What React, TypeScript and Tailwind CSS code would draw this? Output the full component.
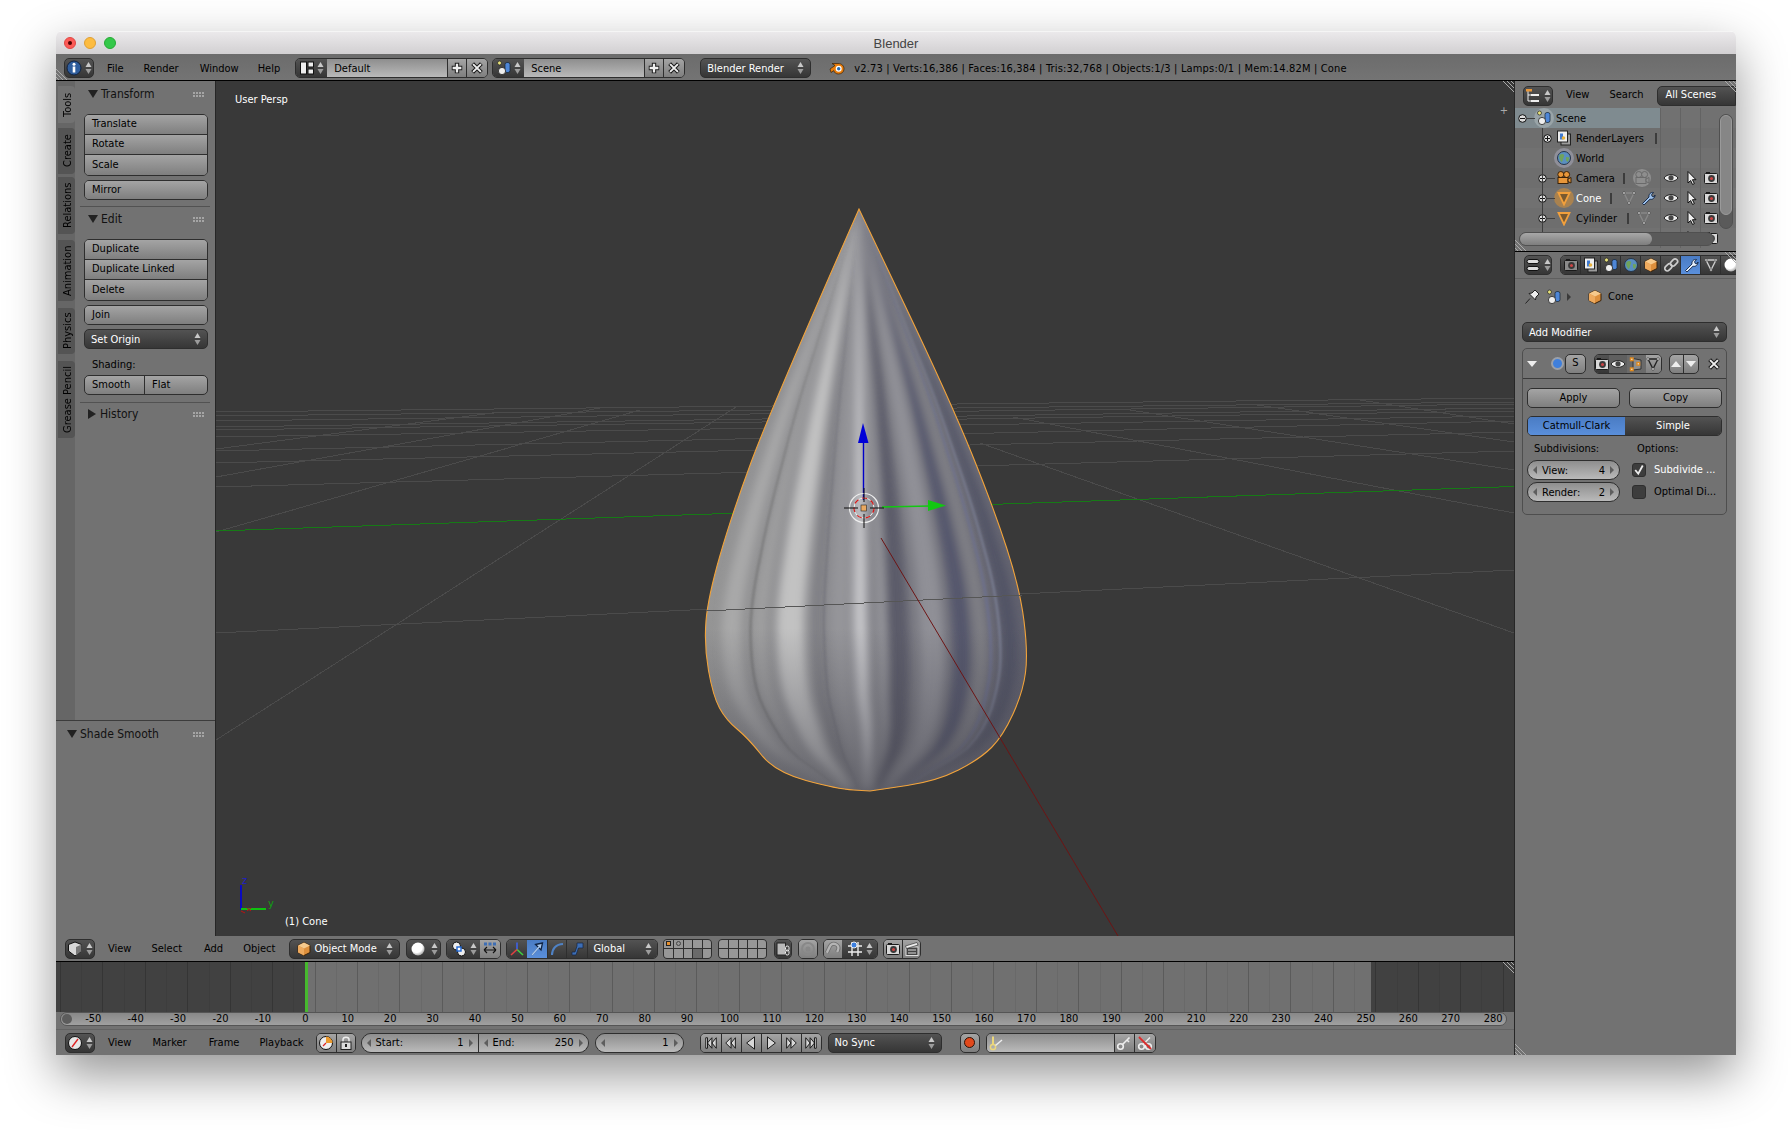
import React from "react";

// ---- cone geometry (page coordinates, the svg viewBox uses the same ones)
const leftEdge = [[209, 859], [411, 770], [514, 732], [597, 708], [645, 704], [696, 713], [720, 726], [738, 748], [772, 775], [789, 837], [791, 870]];
const rightEdge = [[209, 859], [400, 950], [506, 993], [589, 1020], [653, 1028], [692, 1023], [736, 1003], [759, 980], [781, 937], [790, 877], [791, 870]];

const edgeRaw = (edge: number[][], y: number) => {
  for (let i = 0; i < edge.length - 1; i++) {
    const [y0, x0] = edge[i];
    const [y1, x1] = edge[i + 1];
    if (y <= y1) return x0 + ((x1 - x0) * (y - y0)) / Math.max(y1 - y0, 1);
  }
  return edge[edge.length - 1][1];
};

// moving average so the ribs don't kink at the outline's corner points
const edgeAt = (edge: number[][], y: number) => {
  const span = Math.min(30, y - 209);
  let sum = 0;
  let n = 0;
  for (let k = -span; k <= span; k += 5) {
    sum += edgeRaw(edge, Math.min(y + k, 791));
    n++;
  }
  return n ? sum / n : edge[0][1];
};

const smoothPath = (pts: number[][]) => {
  let d = `M${pts[0][0]} ${pts[0][1]}`;
  for (let i = 1; i < pts.length - 1; i++) {
    const mx = (pts[i][0] + pts[i + 1][0]) / 2;
    const my = (pts[i][1] + pts[i + 1][1]) / 2;
    d += ` Q${pts[i][0]} ${pts[i][1]} ${mx} ${my}`;
  }
  return d + ` L${pts[pts.length - 1][0]} ${pts[pts.length - 1][1]}`;
};

const conePath =
  smoothPath([[859, 209], ...leftEdge.slice(1).map(([y, x]) => [x, y])]) +
  smoothPath([[870, 791], ...rightEdge.slice(1, -1).reverse().map(([y, x]) => [x, y]), [859, 209]]).replace("M", "L") +
  "Z";

const rib = (u: number, w: number) => {
  const a: string[] = [];
  const b: string[] = [];
  for (let y = 209; y <= 795; y += 10) {
    const l = edgeAt(leftEdge, y);
    const r = edgeAt(rightEdge, y);
    const x = l + (r - l) * u;
    const half = ((r - l) * w) / 2;
    a.push(`${x - half},${y}`);
    b.unshift(`${x + half},${y}`);
  }
  return [...a, ...b].join(" ");
};

const softRibs: [number, number, string, number][] = [
  [0.08, 0.06, "#b0b0b0", 0.75],
  [0.265, 0.085, "#c4c4c4", 0.95],
  [0.17, 0.04, "#a8a8a8", 0.6],
  [0.484, 0.04, "#cacace", 0.95],
  [0.56, 0.03, "#a8a8ac", 0.7],
  [0.35, 0.04, "#74747c", 0.55],
  [0.42, 0.05, "#9c9ca0", 0.6],
  [0.6, 0.07, "#565664", 0.85],
  [0.708, 0.075, "#96969c", 0.8],
  [0.8, 0.05, "#50516a", 0.85],
  [0.86, 0.04, "#84848a", 0.8],
  [0.95, 0.05, "#4d4f62", 0.8],
];
const thinRibs: [number, number, string, number][] = [
  [0.14, 0.008, "#666666", 0.55],
  [0.37, 0.007, "#66666e", 0.45],
  [0.89, 0.01, "#6c7190", 0.7],
  [0.92, 0.008, "#9096b0", 0.5],
];

const gridLines: number[][] = [
  [216, 487, 1514, 451], [216, 463, 1514, 432], [216, 451, 1514, 421], [216, 437, 1514, 416], [216, 430, 1514, 411],
  [216, 427, 1514, 408], [216, 421, 1514, 404], [216, 416, 1514, 402], [216, 412, 1514, 398],
  [216, 633, 1514, 570], [216, 740, 736, 407], [216, 532, 640, 410], [216, 477, 600, 408], [216, 449, 500, 412],
  [980, 443, 1514, 633], [1013, 417, 1514, 513], [1130, 410, 1514, 470], [1250, 404, 1514, 442], [1360, 400, 1514, 424],
];

// ---- small drawn icons
const S = ({ w = 16, h = 16, vb = "0 0 16 16", children }: { w?: number; h?: number; vb?: string; children: React.ReactNode }) => (
  <svg width={w} height={h} viewBox={vb} className="shrink-0">{children}</svg>
);
const UpDown = () => (
  <S w={7} h={14} vb="0 0 7 14">
    <path d="M3.5 1 L6.5 6 H0.5Z" fill="#c9c9c9" />
    <path d="M3.5 13 L6.5 8 H0.5Z" fill="#9c9c9c" />
  </S>
);
const InfoIcon = () => (
  <S>
    <circle cx="8" cy="8" r="7" fill="#2f5d9c" stroke="#12233f" />
    <rect x="6.7" y="6.5" width="2.6" height="6" fill="#fff" />
    <circle cx="8" cy="4.2" r="1.5" fill="#fff" />
  </S>
);
const ScreenIcon = () => (
  <S>
    <rect x="1.5" y="2" width="6" height="12" fill="#eee" stroke="#111" />
    <rect x="9" y="2" width="5.5" height="5" fill="#eee" stroke="#111" />
    <rect x="9" y="9" width="5.5" height="5" fill="#eee" stroke="#111" />
  </S>
);
const SceneIcon = () => (
  <S>
    <circle cx="3.5" cy="3" r="2" fill="#e8e27a" stroke="#222" strokeWidth=".7" />
    <rect x="9" y="2.5" width="5" height="10" rx="2" fill="#4e86d6" stroke="#123" strokeWidth=".7" />
    <circle cx="6" cy="11" r="3.6" fill="#eee" stroke="#222" strokeWidth=".8" />
  </S>
);
const PlusIcon = () => (
  <S w={14} h={14}>
    <path d="M8 2 V14 M2 8 H14" stroke="#1c1c1c" strokeWidth="5" />
    <path d="M8 3 V13 M3 8 H13" stroke="#eee" strokeWidth="2.6" />
  </S>
);
const XIcon = ({ s = 14 }: { s?: number }) => (
  <S w={s} h={s}>
    <path d="M3 3 L13 13 M13 3 L3 13" stroke="#1c1c1c" strokeWidth="4.6" />
    <path d="M3.5 3.5 L12.5 12.5 M12.5 3.5 L3.5 12.5" stroke="#eee" strokeWidth="2.2" />
  </S>
);
const BlenderLogo = () => (
  <S>
    <path d="M1 9 L6 5.5 L3 3.5 H9 C13 3.5 15 6 15 9 C15 12 12.5 14 9.5 14 C7 14 5.2 12.6 4.8 10.6 L2 12.5Z" fill="#e87d0d" stroke="#3a2208" strokeWidth=".7" />
    <circle cx="9.7" cy="8.8" r="3" fill="#fff" />
    <circle cx="9.7" cy="8.8" r="1.7" fill="#2a6cb0" />
  </S>
);
const CubeIcon = () => (
  <S>
    <path d="M8 1.5 L14 4.5 V11.5 L8 14.5 L2 11.5 V4.5Z" fill="#dd8f3c" stroke="#3a2208" />
    <path d="M2 4.5 L8 7.5 L14 4.5 L8 1.5Z" fill="#f6c98c" />
    <path d="M8 7.5 V14.5 L2 11.5 V4.5Z" fill="#eeaa5e" />
  </S>
);
const ViewCube = () => (
  <S>
    <path d="M8 1 L14.5 3.5 V10 L8 15 L1.5 10 V3.5Z" fill="#d8d8d8" stroke="#111" />
    <path d="M9 6 L14.5 3.5 V10 L9 14.5Z" fill="#777" />
  </S>
);
const ShadeSphere = () => (
  <S>
    <defs>
      <radialGradient id="sph" cx=".4" cy=".35" r=".7">
        <stop offset=".6" stopColor="#fff" />
        <stop offset="1" stopColor="#999" />
      </radialGradient>
    </defs>
    <circle cx="8" cy="8" r="6.5" fill="url(#sph)" />
  </S>
);
const PivotIcon = () => (
  <S>
    <circle cx="5.5" cy="5" r="4" fill="#eee" stroke="#111" />
    <circle cx="10.5" cy="11" r="4" fill="#eee" stroke="#111" />
    <rect x="6" y="6" width="4" height="4" fill="#fff" stroke="#1b63d0" strokeWidth="1.4" />
  </S>
);
const MoveSelIcon = () => (
  <S>
    <path d="M2 9 H14 M2 9 L5 6 M2 9 L5 12 M14 9 L11 6 M14 9 L11 12" stroke="#111" strokeWidth="1.1" fill="none" />
    <g fill="#3d6eb5"><rect x="2" y="1.5" width="3" height="3" /><rect x="6.5" y="1.5" width="3" height="3" /><rect x="11" y="1.5" width="3" height="3" /></g>
  </S>
);
const AxesIcon = () => (
  <S>
    <path d="M8 8.5 V1.5" stroke="#3e62e8" strokeWidth="1.6" />
    <path d="M8 8.5 L14 14" stroke="#3fd03f" strokeWidth="1.6" />
    <path d="M8 8.5 L2 14" stroke="#e04040" strokeWidth="1.6" />
  </S>
);
const ArrowIcon = () => (
  <S>
    <path d="M3 14 L10 6 M13.5 2 L6.5 3.5 L12 9Z" stroke="#0f2343" strokeWidth="1.3" fill="#a9c8ee" />
    <path d="M3 14 L10 6" stroke="#a9c8ee" strokeWidth="1.5" />
  </S>
);
const RotateIcon = () => (
  <S><path d="M3 14 C3 8 7 3 14 3" stroke="#4f82c5" strokeWidth="2" fill="none" /></S>
);
const ScaleIcon = () => (
  <S><path d="M3 14 V11 H6 L8 5 V2 H14 V7 H9.5 L7 14Z" fill="#3d6eb5" stroke="#14243f" strokeWidth=".7" /></S>
);
const CameraIcon = ({ faint = false }: { faint?: boolean }) => (
  <S>
    <rect x="1.5" y="3.5" width="13" height="10" rx="1" fill={faint ? "#8b8b8b" : "#d8d8d8"} stroke="#1a1a1a" />
    <rect x="3" y="2" width="4" height="2" fill="#1a1a1a" />
    <circle cx="8.5" cy="8.5" r="3.4" fill="#3a3a3a" />
    <circle cx="8.5" cy="8.5" r="1.5" fill="#c44" />
  </S>
);
const EyeIcon = () => (
  <S>
    <path d="M1 8 C4 3.5 12 3.5 15 8 C12 12.5 4 12.5 1 8Z" fill="#eee" stroke="#222" />
    <circle cx="8" cy="7.8" r="2.6" fill="#444" />
  </S>
);
const CursorIcon = () => (
  <S><path d="M5 1.5 V13 L7.6 10.5 L9.6 14.5 L11.4 13.6 L9.4 9.7 H13Z" fill="#eee" stroke="#111" /></S>
);
const TriMeshIcon = ({ c = "#888" }: { c?: string }) => (
  <S>
    <path d="M3 3 H13 L8 13Z" fill="none" stroke={c} strokeWidth="1.4" />
    <g fill="#ddd" stroke="#222" strokeWidth=".5"><circle cx="3" cy="3" r="1.3" /><circle cx="13" cy="3" r="1.3" /><circle cx="8" cy="13" r="1.3" /></g>
  </S>
);
const ConeObjIcon = () => (
  <S><path d="M2.5 3 H13.5 L8 14.5Z" fill="#7a5a30" stroke="#f2a03c" strokeWidth="1.8" /></S>
);
const WrenchIcon = ({ c = "#9cc2ee" }: { c?: string }) => (
  <S>
    <path d="M2.5 13.5 L9 7 C8.5 4.5 10.5 2 13.5 2.5 L11.5 4.8 L12.3 6.5 L14 6.8 L15 5 C15 8 12.5 10 10 9.2 L4 15Z" fill={c} stroke="#12233f" strokeWidth=".9" />
  </S>
);
const WorldIcon = () => (
  <S>
    <circle cx="8" cy="8" r="6.5" fill="#5a8fc0" stroke="#26354a" />
    <path d="M3.5 5 C6 3 9 4 8 6.5 C6.5 9 7 12 5.5 12 C4 10 2.5 8 3.5 5Z M10 7 L13.5 7.5 L12 12 L10 10.5Z" fill="#6fa35c" />
  </S>
);
const RenderLayersIcon = () => (
  <S>
    <rect x="5" y="4" width="9.5" height="11" fill="#9c9c9c" stroke="#222" />
    <rect x="1.5" y="1" width="10" height="11" fill="#eee" stroke="#222" />
    <rect x="4" y="3.5" width="3" height="6" fill="#3f7ad0" />
    <circle cx="7.5" cy="8" r="1.8" fill="#e8b23c" />
  </S>
);
const MovieCamIcon = ({ ghost = false }: { ghost?: boolean }) => (
  <S>
    <circle cx="4.8" cy="4.5" r="3" fill={ghost ? "#8e8e8e" : "#e8973a"} stroke={ghost ? "#6a6a6a" : "#3a2208"} />
    <circle cx="10.6" cy="4.5" r="3" fill={ghost ? "#8e8e8e" : "#e8973a"} stroke={ghost ? "#6a6a6a" : "#3a2208"} />
    <rect x="2" y="7.5" width="10" height="6" fill={ghost ? "#8e8e8e" : "#e8973a"} stroke={ghost ? "#6a6a6a" : "#3a2208"} />
    <path d="M12 9 L15 7.5 V13 L12 11.5Z" fill={ghost ? "#8e8e8e" : "#e8973a"} stroke={ghost ? "#6a6a6a" : "#3a2208"} />
  </S>
);
const ClockIcon = () => (
  <S>
    <circle cx="8" cy="8" r="6.5" fill="#e6e6e6" stroke="#111" />
    <path d="M8 8 L11 4 M8 8 L5 12" stroke="#d22" strokeWidth="1.4" />
  </S>
);
const KeyTimeIcon = () => (
  <S>
    <circle cx="8" cy="8" r="6.5" fill="#eee" stroke="#111" />
    <path d="M8 8 V1.5 A6.5 6.5 0 0 1 14.5 8Z" fill="#eb9a2e" />
    <path d="M8 8 L5 11" stroke="#d22" strokeWidth="1.3" />
  </S>
);
const LockIcon = () => (
  <S>
    <path d="M5 7 V4.5 C5 1.5 11 1.5 11 4.5 V7" fill="none" stroke="#eee" strokeWidth="1.5" />
    <rect x="3" y="7" width="10" height="7.5" fill="#ddd" stroke="#222" />
    <rect x="7" y="9" width="2" height="3" fill="#222" />
  </S>
);
const KeyIcon = ({ c = "#eee" }: { c?: string }) => (
  <S>
    <circle cx="4.5" cy="11.5" r="2.8" fill="none" stroke={c} strokeWidth="1.6" />
    <path d="M6.5 9.5 L13.5 2.5 M11 5 L13 7" stroke={c} strokeWidth="1.6" />
  </S>
);
const KeyDelIcon = () => (
  <S>
    <circle cx="4.5" cy="11.5" r="2.8" fill="none" stroke="#eee" strokeWidth="1.6" />
    <circle cx="11.5" cy="11.5" r="2.8" fill="none" stroke="#eee" strokeWidth="1.6" />
    <path d="M6 9.5 L13 2.5 M10 9.5 L3 2.5" stroke="#eee" strokeWidth="1.4" />
    <path d="M2 2 L14 14" stroke="#d62c2c" strokeWidth="2" />
  </S>
);
const KeyingIcon = () => (
  <S>
    <path d="M4 1.5 V10" stroke="#ecd77a" strokeWidth="2" />
    <circle cx="4" cy="12" r="2.6" fill="none" stroke="#ecd77a" strokeWidth="1.5" />
    <path d="M6.5 10.5 L13 5" stroke="#eee" strokeWidth="1.5" />
  </S>
);
const MagnetIcon = () => (
  <S><path d="M4 14 V7 C4 1 13 1 13 7 V9" fill="none" stroke="#6e6e6e" strokeWidth="4" transform="rotate(25 8 8)" /><path d="M4 14 V7 C4 1 13 1 13 7 V9" fill="none" stroke="#b4b4b4" strokeWidth="2.4" transform="rotate(25 8 8)" /></S>
);
const SnapIcon = () => (
  <S>
    <path d="M5 1 V15 M11 1 V15 M1 5 H15 M1 11 H15" stroke="#eee" strokeWidth="1.4" />
    <circle cx="7" cy="4" r="3" fill="#3b7fe0" stroke="#eee" />
  </S>
);
const ClapperIcon = () => (
  <S>
    <rect x="2" y="6" width="12" height="8.5" fill="#444" stroke="#ddd" />
    <path d="M1.5 5 L13 1.5 L14 4 L2.5 7.5Z" fill="#eee" stroke="#222" strokeWidth=".6" />
    <path d="M4 9 H12 M4 12 H12" stroke="#ddd" />
  </S>
);
const PropEditIcon = () => (
  <S><circle cx="8" cy="8" r="6" fill="none" stroke="#888" strokeWidth="2" /><circle cx="8" cy="8" r="2.5" fill="#888" /></S>
);
const LinkDocIcon = () => (
  <S>
    <rect x="2" y="2" width="8.5" height="12" fill="#b9b9b9" stroke="#222" />
    <rect x="10.5" y="5" width="3.5" height="5" rx="1.7" fill="none" stroke="#eee" />
    <rect x="10.5" y="9" width="3.5" height="5" rx="1.7" fill="none" stroke="#eee" />
  </S>
);
const ChainIcon = () => (
  <S>
    <rect x="1" y="8" width="8" height="5" rx="2.5" transform="rotate(-45 5 10)" fill="none" stroke="#ccc" strokeWidth="1.7" />
    <rect x="7" y="3" width="8" height="5" rx="2.5" transform="rotate(-45 11 5.5)" fill="none" stroke="#ccc" strokeWidth="1.7" />
  </S>
);
const PinIcon = () => (
  <S><path d="M1.5 14.5 L6 9.5 M5 4.5 L11.5 11 L12 8 L15 5 L11 1 L8 4Z" fill="#eee" stroke="#222" /></S>
);
const VertsIcon = () => (
  <S>
    <path d="M5 2.5 L13 4 V13 L5 14Z" fill="#8e8e8e" stroke="#333" />
    <g fill="#eee" stroke="#e08a1e" strokeWidth="1.4"><rect x="2.5" y="2" width="2.6" height="2.6" /><rect x="9" y="6.5" width="2.6" height="2.6" /><rect x="2.5" y="12" width="2.6" height="2.6" /></g>
  </S>
);
const Hatch = ({ flip = false }: { flip?: boolean }) => (
  <svg width="14" height="14" viewBox="0 0 14 14" className={flip ? "absolute bottom-0 left-0" : "absolute top-0 right-0"}>
    {flip
      ? <path d="M0 3 L11 14 M0 7 L7 14 M0 11 L3 14" stroke="#aaa" strokeWidth="1" />
      : <path d="M3 0 L14 11 M7 0 L14 7 M11 0 L14 3" stroke="#aaa" strokeWidth="1" />}
  </svg>
);

// ---- shared widget classes
const lightBtn = "bg-gradient-to-b from-[#a4a4a4] to-[#7f7f7f] text-black";
const darkBtn = "bg-gradient-to-b from-[#535353] to-[#363636] text-white";
const blueBtn = "bg-gradient-to-b from-[#4a7cc4] to-[#5a8fdb]";
const outline = "border border-[#2e2e2e]";
const field = "bg-gradient-to-b from-[#8e8e8e] to-[#bababa] text-black";

const Arrow = ({ left = false }: { left?: boolean }) => (
  <span className={left
    ? "w-0 h-0 shrink-0 border-y-[4px] border-y-transparent border-r-[4px] border-r-[#5e5e5e]"
    : "w-0 h-0 shrink-0 border-y-[4px] border-y-transparent border-l-[4px] border-l-[#5e5e5e]"} />
);

const IconSelect = ({ icon, className = "" }: { icon: React.ReactNode; className?: string }) => (
  <div className={`flex items-center justify-center gap-[3px] w-[30px] h-5 rounded-[5px] ${outline} ${darkBtn} ${className}`}>
    {icon}
    <UpDown />
  </div>
);

const Menu = ({ items, lefts }: { items: string[]; lefts: string[] }) => (
  <>
    {items.map((t, i) => (
      <span key={t} className={`text-black translate-y-px ${lefts[i]}`}>{t}</span>
    ))}
  </>
);

const DataBlock = ({ icon, name, w }: { icon: React.ReactNode; name: string; w: string }) => (
  <div className={`flex h-5 rounded-[5px] overflow-hidden ${outline}`}>
    <div className={`flex items-center justify-center gap-[2px] w-[31px] ${darkBtn}`}>{icon}<UpDown /></div>
    <div className={`flex items-center pl-[7px] border-r border-[#2e2e2e] ${field} ${w}`}><span className="translate-y-px">{name}</span></div>
    <div className={`flex items-center justify-center w-[19px] border-r border-[#2e2e2e] ${lightBtn}`}><PlusIcon /></div>
    <div className={`flex items-center justify-center w-[20px] ${lightBtn}`}><XIcon /></div>
  </div>
);

const Select = ({ label, icon, className = "" }: { label: string; icon?: React.ReactNode; className?: string }) => (
  <div className={`flex items-center h-5 px-[6px] gap-[2px] rounded-[5px] ${outline} ${darkBtn} ${className}`}>
    {icon}
    <span className="flex-1 translate-y-px">{label}</span>
    <UpDown />
  </div>
);

const IconGroup = ({ icons, className = "", cell = "w-5", dark = -1 }: { icons: React.ReactNode[]; className?: string; cell?: string; dark?: number }) => (
  <div className={`flex h-5 rounded-[5px] overflow-hidden ${outline} ${className}`}>
    {icons.map((ic, i) => (
      <div
        key={i}
        className={`flex items-center justify-center ${cell} ${i > 0 ? "border-l border-[#2e2e2e]" : ""} ${i === dark ? darkBtn : lightBtn}`}
      >
        {ic}
      </div>
    ))}
  </div>
);

const LayerBlock = ({ className = "", first = false }: { className?: string; first?: boolean }) => (
  <div className={`grid grid-cols-5 grid-rows-2 gap-px w-[49px] h-5 rounded-[4px] overflow-hidden bg-[#2e2e2e] border border-[#2e2e2e] ${className}`}>
    {Array.from({ length: 10 }).map((_, i) => (
      <div key={i} className={`flex items-center justify-center ${first && i === 8 ? "bg-[#6a6a6a]" : "bg-[#979797]"}`}>
        {first && i === 0 && <span className="w-[5px] h-[5px] bg-[#e8912e] border border-[#222]" />}
        {first && i === 1 && <span className="w-[5px] h-[5px] rounded-full border border-[#444]" />}
      </div>
    ))}
  </div>
);

const PanelHeader = ({ title, open = true, className = "" }: { title: string; open?: boolean; className?: string }) => (
  <div className={`flex items-center h-5 pr-[11px] text-[#111] text-[12px] ${className}`}>
    <span className={open
      ? "w-0 h-0 mr-[3px] border-x-[5px] border-x-transparent border-t-[8px] border-t-[#222]"
      : "w-0 h-0 mr-[4px] border-y-[5px] border-y-transparent border-l-[8px] border-l-[#222]"} />
    <span className="flex-1">{title}</span>
    <span className="grid grid-cols-4 gap-px">
      {Array.from({ length: 8 }).map((_, i) => <span key={i} className="w-[2px] h-[2px] bg-[#a5a5a5]" />)}
    </span>
  </div>
);

const BtnColumn = ({ labels }: { labels: string[] }) => (
  <div className={`flex flex-col rounded-[5px] overflow-hidden divide-y divide-[#2e2e2e] ${outline}`}>
    {labels.map((t) => (
      <div key={t} className={`flex items-center pl-[7px] ${labels.length > 1 ? "h-5" : "h-[18px]"} ${lightBtn}`}>{t}</div>
    ))}
  </div>
);

const tabs = [
  { t: "Tools", h: "h-[37px]", mt: "mt-[5px]", active: true },
  { t: "Create", h: "h-[46px]", mt: "mt-[5px]" },
  { t: "Relations", h: "h-[57px]", mt: "mt-[3px]" },
  { t: "Animation", h: "h-[61px]", mt: "mt-[6px]" },
  { t: "Physics", h: "h-[46px]", mt: "mt-[7px]" },
  { t: "Grease Pencil", h: "h-[77px]", mt: "mt-[7px]" },
];

const Toolshelf = () => (
  <div className="flex flex-col w-[160px] bg-[#727272] border-r border-[#262626]">
    <div className="flex h-[639px]">
      <div className="flex flex-col w-[19px] pl-[2px] bg-[#666666]">
        {tabs.map((tab) => (
          <div
            key={tab.t}
            className={`flex items-center justify-center pr-[3px] rounded-l-[4px] [writing-mode:vertical-rl] rotate-180 text-black ${tab.h} ${tab.mt} ${
              tab.active ? "bg-[#727272]" : "bg-[#545454]"
            }`}
          >
            {tab.t}
          </div>
        ))}
      </div>
      <div className="flex-1 flex flex-col">
        <PanelHeader title="Transform" className="mt-[3px] pl-[13px]" />
        <div className="flex flex-col gap-[4px] mt-[10px] ml-[9px] mr-[7px]">
          <BtnColumn labels={["Translate", "Rotate", "Scale"]} />
          <BtnColumn labels={["Mirror"]} />
        </div>
        <div className="h-px mt-[6px] mx-[5px] bg-[#525252]" />
        <PanelHeader title="Edit" className="mt-[2px] pl-[13px]" />
        <div className="flex flex-col gap-[4px] mt-[10px] ml-[9px] mr-[7px]">
          <BtnColumn labels={["Duplicate", "Duplicate Linked", "Delete"]} />
          <BtnColumn labels={["Join"]} />
          <Select label="Set Origin" />
          <span className="mt-[4px] pl-[8px] text-black leading-[16px]">Shading:</span>
          <div className={`flex h-5 -mt-[2px] rounded-[5px] overflow-hidden ${outline} ${lightBtn}`}>
            <div className="flex items-center w-[60px] pl-[7px] border-r border-[#2e2e2e]">Smooth</div>
            <div className="flex items-center pl-[7px]">Flat</div>
          </div>
        </div>
        <div className="h-px mt-[7px] mx-[5px] bg-[#525252]" />
        <PanelHeader title="History" open={false} className="mt-[1px] pl-[13px]" />
      </div>
    </div>
    <div className="h-px bg-[#3c3c3c]" />
    <PanelHeader title="Shade Smooth" className="mt-[3px] pl-[11px]" />
  </div>
);

const Viewport = () => (
  <div className="relative flex-1 bg-[#393939] overflow-hidden">
    <svg viewBox="216 81 1298 855" className="absolute inset-0 w-full h-full">
      <defs>
        <clipPath id="cone"><path d={conePath} /></clipPath>
        <linearGradient id="coneBase" x1="0" x2="1" y1="0" y2="0">
          <stop offset="0" stopColor="#959595" />
          <stop offset=".45" stopColor="#8b8b90" />
          <stop offset=".7" stopColor="#76767f" />
          <stop offset="1" stopColor="#60606d" />
        </linearGradient>
        <linearGradient id="coneFade" x1="0" x2="0" y1="0" y2="1">
          <stop offset=".72" stopColor="#40404a" stopOpacity="0" />
          <stop offset="1" stopColor="#40404a" stopOpacity=".55" />
        </linearGradient>
        <filter id="blurWide" x="-30%" y="-10%" width="160%" height="120%"><feGaussianBlur stdDeviation="4" /></filter>
        <filter id="blurThin" x="-30%" y="-10%" width="160%" height="120%"><feGaussianBlur stdDeviation="1" /></filter>
      </defs>
      <g shapeRendering="crispEdges" stroke="#4b4b4b" strokeWidth="1">
        {gridLines.map((l, i) => <line key={i} x1={l[0]} y1={l[1]} x2={l[2]} y2={l[3]} />)}
      </g>
      <line x1="216" y1="531" x2="1514" y2="486.5" stroke="#167a16" strokeWidth="1" shapeRendering="crispEdges" />
      <path d={conePath} fill="url(#coneBase)" />
      <g clipPath="url(#cone)">
        <g filter="url(#blurWide)">
          {softRibs.map(([u, w, c, o], i) => <polygon key={i} points={rib(u, w)} fill={c} opacity={o} />)}
        </g>
        <g filter="url(#blurThin)">
          {thinRibs.map(([u, w, c, o], i) => <polygon key={i} points={rib(u, w)} fill={c} opacity={o} />)}
        </g>
        <path d={conePath} fill="url(#coneFade)" />
      </g>
      <path d={conePath} fill="none" stroke="#f2a33a" strokeWidth="1.1" />
      <line x1="706" y1="611" x2="1022" y2="595" stroke="#565656" strokeWidth="1" shapeRendering="crispEdges" />
      <line x1="881" y1="538" x2="1118" y2="936" stroke="#6d1414" strokeWidth="1" />
      {/* manipulator and 3d cursor */}
      <line x1="863.5" y1="500" x2="863.5" y2="443" stroke="#0000c8" strokeWidth="1.4" />
      <path d="M863 423 L858 443 H868.5Z" fill="#0000d8" />
      <line x1="882" y1="507" x2="930" y2="506" stroke="#12c812" strokeWidth="1.4" />
      <path d="M928 500 L946 505.5 L928 511Z" fill="#12c812" />
      <circle cx="864" cy="508" r="14.5" fill="none" stroke="#eee" strokeWidth="1.2" />
      <circle cx="864" cy="508" r="10" fill="none" stroke="#eee" strokeWidth="1" />
      <circle cx="864" cy="508" r="10" fill="none" stroke="#d81414" strokeWidth="1.2" strokeDasharray="5 4" />
      <path d="M844 508 H858 M870 508 H884 M864 488 V502 M864 514 V528" stroke="#0c0c0c" strokeWidth="1" />
      <rect x="861" y="505" width="5.5" height="6" fill="#e8a860" stroke="#222" strokeWidth=".6" />
      {/* mini axis gizmo */}
      <line x1="241" y1="885" x2="241" y2="910" stroke="#0a0ac0" strokeWidth="2" />
      <line x1="241" y1="909" x2="266" y2="909" stroke="#10c010" strokeWidth="2" />
      <path d="M241 911 L245 913 M247 908 L251 911 M251 908 L247 911" stroke="#c01010" strokeWidth="1" />
    </svg>
    <span className="absolute left-[19px] top-[11px] text-white">User Persp</span>
    <span className="absolute left-[69px] bottom-[6px] text-white">(1) Cone</span>
    <span className="absolute left-[26px] bottom-[47px] text-[#2020c8]">z</span>
    <span className="absolute left-[52px] bottom-[24px] text-[#10a010]">y</span>
    <span className="absolute right-[6px] top-[24px] text-[#aaa] leading-none">+</span>
    <Hatch />
  </div>
);

const rulerLabels = Array.from({ length: 34 }).map((_, i) => -50 + i * 10);
const tickXs = Array.from({ length: 80 }).map((_, i) => 4.5 + i * 21.215);

const Timeline = () => (
  <div className="relative flex h-[50px] bg-[#727272]">
    <div className="w-[249px] bg-[#414141]" />
    <div className="w-[3px] bg-[#46b82e]" />
    <div className="w-[1063px] bg-[#707070]" />
    <div className="flex-1 bg-[#414141]" />
    <svg className="absolute inset-0 w-full h-full" shapeRendering="crispEdges">
      {tickXs.map((x, i) => (
        <line key={i} x1={x} y1="0" x2={x} y2="50" stroke="#000" strokeOpacity={i % 2 ? 0.06 : 0.18} />
      ))}
    </svg>
    <Hatch />
  </div>
);

const Ruler = () => (
  <div className="flex h-[18px] bg-[#727272] pl-1 pr-[7px] border-b border-[#636363]">
    <div className="relative flex items-center w-full h-[14px] pl-[11px] overflow-hidden rounded-full bg-gradient-to-b from-[#888888] to-[#a0a0a0] border border-[#555555] text-black">
      <span className="absolute left-px top-px w-[10px] h-[10px] rounded-full bg-[#5c5c5c]" />
      {rulerLabels.map((n) => (
        <span key={n} className="w-[42.43px] shrink-0 text-center">{n}</span>
      ))}
    </div>
  </div>
);

const NumField = ({ label, value, className = "" }: { label: string; value: string; className?: string }) => (
  <div className={`flex items-center gap-[5px] px-[5px] ${field} ${className}`}>
    <Arrow left />
    <span className="flex-1 translate-y-px">{label}</span>
    <span className="translate-y-px">{value}</span>
    <Arrow />
  </div>
);

const Play = ({ d }: { d: string }) => (
  <S w={14} h={14}><path d={d} fill="#d8d8d8" stroke="#161616" strokeWidth="1.1" /></S>
);

const transport = [
  "M2 2 H4 V14 H2Z M14 2 V14 L9 8Z M9 2 V14 L4 8Z",
  "M13 2 V14 L8 8Z M8 2 V14 L2 8Z",
  "M12 1 V15 L3 8Z",
  "M4 1 V15 L13 8Z",
  "M3 2 V14 L8 8Z M8 2 V14 L14 8Z",
  "M12 2 H14 V14 H12Z M2 2 V14 L7 8Z M7 2 V14 L12 8Z",
];

const View3DHeader = () => (
  <div className="flex items-center h-[26px] bg-[#727272] border-b border-black">
    <IconSelect icon={<ViewCube />} className="ml-[9px]" />
    <Menu items={["View", "Select", "Add", "Object"]} lefts={["ml-[13px]", "ml-[20px]", "ml-[22px]", "ml-[20px]"]} />
    <Select label="Object Mode" icon={<CubeIcon />} className="ml-[14px] w-[111px]" />
    <div className={`flex items-center justify-center gap-[5px] ml-[6px] w-[35px] h-5 rounded-[5px] ${outline} ${darkBtn}`}><ShadeSphere /><UpDown /></div>
    <div className={`flex ml-[5px] h-5 rounded-[5px] overflow-hidden ${outline}`}>
      <div className={`flex items-center justify-center gap-[3px] w-[33px] ${darkBtn}`}><PivotIcon /><UpDown /></div>
      <div className={`flex items-center justify-center w-5 ${lightBtn}`}><MoveSelIcon /></div>
    </div>
    <div className={`flex ml-[5px] h-5 rounded-[5px] overflow-hidden ${outline}`}>
      <div className={`flex items-center justify-center w-5 ${darkBtn}`}><AxesIcon /></div>
      <div className={`flex items-center justify-center w-5 ${blueBtn}`}><ArrowIcon /></div>
      <div className={`flex items-center justify-center w-5 border-x border-[#2e2e2e] ${darkBtn}`}><RotateIcon /></div>
      <div className={`flex items-center justify-center w-5 ${darkBtn}`}><ScaleIcon /></div>
      <div className={`flex items-center w-[70px] px-[5px] border-l border-[#2e2e2e] ${darkBtn}`}><span className="flex-1 translate-y-px">Global</span><UpDown /></div>
    </div>
    <LayerBlock first className="ml-[5px]" />
    <LayerBlock className="ml-[6px]" />
    <IconGroup icons={[<LinkDocIcon key="l" />]} cell="w-4" className="ml-[7px]" dark={0} />
    <IconGroup icons={[<PropEditIcon key="p" />]} cell="w-[18px]" className="ml-[6px]" />
    <div className={`flex ml-[5px] h-5 rounded-[5px] overflow-hidden ${outline}`}>
      <div className={`flex items-center justify-center w-[18px] ${lightBtn}`}><MagnetIcon /></div>
      <div className={`flex items-center justify-center gap-[3px] w-[35px] ${darkBtn}`}><SnapIcon /><UpDown /></div>
    </div>
    <IconGroup icons={[<CameraIcon key="c" />, <ClapperIcon key="k" />]} cell="w-[18px]" className="ml-[5px]" />
  </div>
);

const TimelineHeader = () => (
  <div className="relative flex items-center h-[25px] bg-[#727272]">
    <IconSelect icon={<ClockIcon />} className="ml-[9px]" />
    <Menu items={["View", "Marker", "Frame", "Playback"]} lefts={["ml-[13px]", "ml-[21px]", "ml-[22px]", "ml-[20px]"]} />
    <IconGroup icons={[<KeyTimeIcon key="k" />, <LockIcon key="l" />]} cell="w-[19px]" className="ml-[12px]" />
    <div className={`flex ml-[5px] w-[228px] h-5 rounded-full overflow-hidden ${outline}`}>
      <NumField label="Start:" value="1" className="w-[117px] border-r border-[#2e2e2e]" />
      <NumField label="End:" value="250" className="flex-1" />
    </div>
    <div className={`flex ml-[6px] w-[89px] h-5 rounded-full overflow-hidden ${outline}`}>
      <NumField label="" value="1" className="flex-1" />
    </div>
    <IconGroup icons={transport.map((d) => <Play key={d} d={d} />)} cell="w-5" className="ml-[16px]" />
    <Select label="No Sync" className="ml-[6px] w-[114px]" />
    <div className={`flex items-center justify-center ml-[18px] w-5 h-5 rounded-[5px] ${outline} ${lightBtn}`}>
      <span className="w-[11px] h-[11px] rounded-full bg-[#e2491c] border border-[#2a1208]" />
    </div>
    <div className={`flex ml-[6px] w-[170px] h-5 rounded-[5px] overflow-hidden ${outline}`}>
      <div className={`flex items-center flex-1 pl-[2px] border-r border-[#2e2e2e] ${field}`}><KeyingIcon /></div>
      <div className={`flex items-center justify-center w-5 border-r border-[#2e2e2e] ${lightBtn}`}><KeyIcon /></div>
      <div className={`flex items-center justify-center w-5 ${lightBtn}`}><KeyDelIcon /></div>
    </div>
  </div>
);

type Row = {
  name: string;
  pad: string;
  gap: string;
  icon: React.ReactNode;
  expand?: "plus" | "minus" | "none";
  white?: boolean;
  halo?: string;
  sub?: React.ReactNode;
  restrict?: boolean;
  active?: boolean;
};

const Expander = ({ kind }: { kind: "plus" | "minus" | "none" }) =>
  kind === "none" ? (
    <span className="w-[9px] shrink-0" />
  ) : (
    <S w={9} h={9} vb="0 0 9 9">
      <circle cx="4.5" cy="4.5" r="3.8" fill="#ddd" stroke="#111" />
      <path d={kind === "plus" ? "M2 4.5 H7 M4.5 2 V7" : "M2 4.5 H7"} stroke="#111" />
    </S>
  );

const Sep = ({ cls }: { cls: string }) => <span className={`w-[2px] h-[11px] bg-[#3c3c3c] shrink-0 ${cls}`} />;

const rows: Row[] = [
  { name: "Scene", pad: "pl-[3px]", gap: "ml-[9px]", expand: "minus", icon: <SceneIcon />, active: true, halo: "rounded-full bg-[#99a4a8] ring-2 ring-[#99a4a8]" },
  { name: "RenderLayers", pad: "pl-[28px]", gap: "ml-[4px]", expand: "plus", icon: <RenderLayersIcon />, sub: <Sep cls="ml-[11px]" /> },
  { name: "World", pad: "pl-[28px]", gap: "ml-[4px]", expand: "none", icon: <WorldIcon />, halo: "rounded-full bg-[#8f8f99] ring-2 ring-[#8f8f99]" },
  { name: "Camera", pad: "pl-[23px]", gap: "ml-[9px]", expand: "plus", icon: <MovieCamIcon />, restrict: true, sub: <><Sep cls="ml-[8px]" /><span className="ml-[8px] flex items-center justify-center w-[18px] h-[18px] rounded-full bg-[#8e8e8e]"><MovieCamIcon ghost /></span></> },
  { name: "Cone", pad: "pl-[23px]", gap: "ml-[9px]", expand: "plus", icon: <ConeObjIcon />, white: true, halo: "rounded-full bg-[#a9824f] ring-2 ring-[#a9824f]", restrict: true, sub: <><Sep cls="ml-[9px]" /><span className="ml-[9px]"><TriMeshIcon /></span><span className="ml-[3px]"><WrenchIcon /></span></> },
  { name: "Cylinder", pad: "pl-[23px]", gap: "ml-[9px]", expand: "plus", icon: <ConeObjIcon />, restrict: true, sub: <><Sep cls="ml-[10px]" /><span className="ml-[7px]"><TriMeshIcon /></span></> },
  { name: "Lamp", pad: "pl-[23px]", gap: "ml-[9px]", expand: "plus", icon: <ConeObjIcon />, restrict: true },
];

const Outliner = () => (
  <div className="relative h-[143px] overflow-hidden bg-[#717171]">
    {rows.map((r, i) => (
      <div key={r.name} className={`flex h-5 ${i % 2 ? "bg-[#6e6e6e]" : "bg-[#717171]"}`}>
        <div className={`flex items-center w-[145px] shrink-0 ${r.pad} ${r.active ? "bg-[#7f8b90]" : ""}`}>
          <Expander kind={r.expand ?? "none"} />
          <span className={`flex mr-[4px] ${r.gap} ${r.halo ?? ""}`}>{r.icon}</span>
          <span className={`translate-y-px ${r.white ? "text-white" : "text-black"}`}>{r.name}</span>
          {r.sub}
        </div>
        <div className="flex items-center justify-center w-5 border-l border-[#636363]">{r.restrict && <EyeIcon />}</div>
        <div className="flex items-center justify-center w-5 border-l border-[#636363]">{r.restrict && <CursorIcon />}</div>
        <div className="flex items-center justify-center w-5 border-l border-[#636363]">{r.restrict && <CameraIcon />}</div>
      </div>
    ))}
    <svg className="absolute inset-0 w-full h-full pointer-events-none" shapeRendering="crispEdges">
      <path d="M12 10 H20 M27 20 V124 M31 70 H40 M31 90 H40 M31 110 H40" stroke="#3e3e3e" fill="none" />
    </svg>
    <div className="absolute right-[3px] top-[6px] w-[14px] h-[115px] rounded-full bg-[#5a5a5a] border border-[#505050]">
      <div className="h-[100px] rounded-full bg-[#868686] border border-[#9a9a9a]" />
    </div>
    <div className="absolute left-[4px] right-[22px] top-[124px] h-[14px] rounded-full bg-[#5a5a5a] border border-[#505050]">
      <div className="w-[132px] h-full rounded-full bg-gradient-to-b from-[#a8a8a8] to-[#7e7e7e]" />
    </div>
    <Hatch flip />
  </div>
);

const propTabs = [
  <CameraIcon faint key="0" />, <RenderLayersIcon key="1" />, <SceneIcon key="2" />, <WorldIcon key="3" />, <CubeIcon key="4" />,
  <ChainIcon key="5" />, <WrenchIcon key="6" c="#e6f0fc" />, <TriMeshIcon c="#ccc" key="7" />, <ShadeSphere key="8" />,
];

const Properties = () => (
  <div className="relative flex-1 bg-[#727272]">
    <div className="relative flex items-center h-[27px] pl-[9px] border-b border-[#5f5f5f] overflow-hidden">
      <IconSelect icon={<S><rect x="2" y="2.5" width="12" height="4" rx="2" fill="#ddd" stroke="#111" /><rect x="2" y="9.5" width="12" height="4" rx="2" fill="#ddd" stroke="#111" /></S>} />
      <div className="ml-[8px] shrink-0">
        <div className={`flex h-5 w-[190px] rounded-[5px] overflow-hidden ${outline}`}>
          {propTabs.map((ic, i) => (
            <div key={i} className={`flex items-center justify-center w-5 shrink-0 border-r border-[#2e2e2e] ${i === 6 ? blueBtn : darkBtn}`}>{ic}</div>
          ))}
        </div>
      </div>
      <Hatch />
    </div>
    <div className="flex items-center h-[43px] pb-[7px] pl-[9px] text-black">
      <PinIcon />
      <span className="ml-[6px]"><SceneIcon /></span>
      <span className="ml-[5px] w-0 h-0 border-y-[4px] border-y-transparent border-l-[4px] border-l-[#3a3a3a]" />
      <span className="ml-[16px]"><CubeIcon /></span>
      <span className="ml-[5px]">Cone</span>
    </div>
    <div className="flex flex-col ml-[7px] mr-[9px]">
      <Select label="Add Modifier" />
      <div className="flex flex-col h-[167px] mt-[6px] rounded-[5px] border border-[#4e4e4e] px-[4px]">
        <div className="flex items-center h-[30px] -mx-[4px] px-[5px] border-b border-[#3a3a3a]">
          <span className="-ml-[1px] w-0 h-0 border-x-[5px] border-x-transparent border-t-[6px] border-t-[#eee]" />
          <span className="ml-[14px] flex items-center justify-center w-[13px] h-[13px] rounded-full bg-[#3f7fdc] border-2 border-[#9aa0aa]" />
          <div className={`flex items-center justify-center ml-[1px] w-[22px] h-5 rounded-[5px] ${outline} ${lightBtn}`}>S</div>
          <div className={`flex ml-[8px] h-5 rounded-[5px] overflow-hidden ${outline}`}>
            <div className={`flex items-center justify-center w-[14px] ${darkBtn}`}><CameraIcon /></div>
            <div className="flex items-center justify-center w-[19px] bg-[#5f5f5f]"><EyeIcon /></div>
            <div className="flex items-center justify-center w-[20px] bg-[#6a6a6a]"><VertsIcon /></div>
            <div className={`flex items-center justify-center w-[15px] ${lightBtn}`}><TriMeshIcon c="#222" /></div>
          </div>
          <div className={`flex ml-[7px] h-5 rounded-[5px] overflow-hidden ${outline} ${lightBtn}`}>
            <span className="flex items-center justify-center w-[14px] border-r border-[#2e2e2e]"><span className="w-0 h-0 border-x-[5px] border-x-transparent border-b-[6px] border-b-[#eee]" /></span>
            <span className="flex items-center justify-center w-[15px]"><span className="w-0 h-0 border-x-[5px] border-x-transparent border-t-[6px] border-t-[#eee]" /></span>
          </div>
          <span className="ml-[8px]"><XIcon /></span>
        </div>
        <div className="grid grid-cols-2 gap-[9px] mt-[9px]">
          <div className={`flex items-center justify-center h-5 rounded-[5px] ${outline} ${lightBtn}`}>Apply</div>
          <div className={`flex items-center justify-center h-5 rounded-[5px] ${outline} ${lightBtn}`}>Copy</div>
        </div>
        <div className={`flex h-5 mt-[8px] rounded-[5px] overflow-hidden ${outline}`}>
          <div className={`flex items-center justify-center w-[97px] text-black ${blueBtn}`}>Catmull-Clark</div>
          <div className={`flex items-center justify-center flex-1 ${darkBtn}`}>Simple</div>
        </div>
        <div className="grid grid-cols-[103px_1fr] mt-[5px] text-black">
          <div className="flex flex-col">
            <span className="pl-[7px] leading-[16px] mb-[3px]">Subdivisions:</span>
            <NumField label="View:" value="4" className={`w-[93px] h-5 rounded-full ${outline}`} />
            <NumField label="Render:" value="2" className={`w-[93px] h-5 mt-[2px] rounded-full ${outline}`} />
          </div>
          <div className="flex flex-col">
            <span className="pl-[7px] leading-[16px] mb-[3px]">Options:</span>
            <div className="flex items-center h-5 gap-2 pl-[2px]">
              <span className="flex items-center justify-center w-[14px] h-[14px] rounded-[3px] bg-[#3d3d3d] border border-[#2e2e2e]">
                <S w={12} h={12}><path d="M3 8 L7 13 L13 2" fill="none" stroke="#eee" strokeWidth="2.4" /></S>
              </span>
              <span className="text-white">Subdivide ...</span>
            </div>
            <div className="flex items-center h-5 mt-[2px] gap-2 pl-[2px]">
              <span className="w-[14px] h-[14px] rounded-[3px] bg-[#3d3d3d] border border-[#2e2e2e]" />
              <span>Optimal Di...</span>
            </div>
          </div>
        </div>
      </div>
    </div>
    <Hatch flip />
  </div>
);

export default function App() {
  return (
    <div className="min-h-[1135px] bg-white pt-[31px] pl-[56px] font-['DejaVu_Sans_Condensed','DejaVu_Sans',sans-serif] text-[11px]">
      <div className="flex flex-col w-[1680px] h-[1024px] rounded-t-[6px] overflow-hidden shadow-[0_20px_50px_rgba(0,0,0,0.42)]">
        <div className="relative flex items-center justify-center h-[23px] pt-[2px] shrink-0 bg-gradient-to-b from-[#ebe9eb] to-[#d2d0d2] border-t border-[#f5f5f5] font-['Liberation_Sans',sans-serif] text-[13px] text-[#444]">
          <div className="absolute left-[8px] top-[5px] flex gap-2">
            <span className="flex items-center justify-center w-3 h-3 rounded-full bg-[#fc5b57] border border-[#df4744]"><span className="w-1 h-1 rounded-full bg-[#4d0000]" /></span>
            <span className="w-3 h-3 rounded-full bg-[#fdbc40] border border-[#de9f34]" />
            <span className="w-3 h-3 rounded-full bg-[#34c84a] border border-[#27aa35]" />
          </div>
          Blender
        </div>

        <div className="relative flex items-center h-[27px] pt-[2px] shrink-0 bg-gradient-to-b from-[#6c6c6c] to-[#747474] border-b border-black">
          <IconSelect icon={<InfoIcon />} className="ml-[8px]" />
          <Menu items={["File", "Render", "Window", "Help"]} lefts={["ml-[13px]", "ml-[20px]", "ml-[21px]", "ml-[19px]"]} />
          <div className="ml-[15px]"><DataBlock icon={<ScreenIcon />} name="Default" w="w-[121px]" /></div>
          <div className="ml-[4px]"><DataBlock icon={<SceneIcon />} name="Scene" w="w-[121px]" /></div>
          <Select label="Blender Render" className="ml-[15px] w-[111px]" />
          <span className="ml-[18px]"><BlenderLogo /></span>
          <span className="ml-[9px] text-black whitespace-pre tracking-[0.17px] translate-y-px">v2.73 | Verts:16,386 | Faces:16,384 | Tris:32,768 | Objects:1/3 | Lamps:0/1 | Mem:14.82M | Cone</span>
          <Hatch flip />
        </div>

        <div className="flex flex-1 min-h-0">
          <div className="flex flex-col w-[1458px] shrink-0">
            <div className="flex h-[855px] shrink-0">
              <Toolshelf />
              <Viewport />
            </div>
            <View3DHeader />
            <Timeline />
            <Ruler />
            <TimelineHeader />
          </div>
          <div className="flex flex-col flex-1 min-w-0 bg-[#727272] border-l border-[#262626]">
            <div className="relative flex items-center h-[27px] pt-[2px] pl-[8px] shrink-0 bg-[#727272]">
              <div className={`flex items-center justify-center gap-[3px] w-[30px] h-5 rounded-[5px] ${outline} ${darkBtn}`}>
                <S><path d="M3 2 V13 H6 M3 7 H6" stroke="#eee" fill="none" /><rect x="1" y="1" width="6" height="2.5" fill="#e8973a" /><rect x="6" y="6" width="8" height="2" fill="#eee" /><rect x="6" y="12" width="8" height="2" fill="#eee" /></S>
                <UpDown />
              </div>
              <span className="ml-[13px] text-black">View</span>
              <span className="ml-[20px] text-black">Search</span>
              <div className={`flex items-center ml-[14px] flex-1 h-5 pl-[7px] rounded-l-[5px] ${outline} ${darkBtn}`}>All Scenes</div>
              <Hatch />
            </div>
            <Outliner />
            <div className="h-px shrink-0 bg-black" />
            <Properties />
          </div>
        </div>
      </div>
    </div>
  );
}
